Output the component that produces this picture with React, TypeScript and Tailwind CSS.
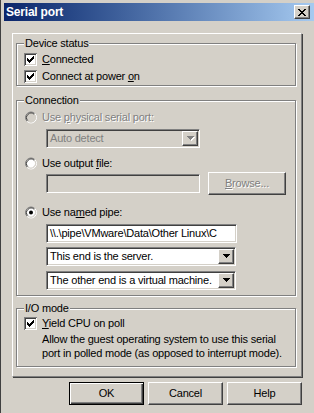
import React from "react";

const sunken =
  "border border-t-[#808080] border-l-[#808080] border-r-white border-b-white shadow-[inset_1px_1px_0_#404040,inset_-1px_-1px_0_#d4d0c8]";
const raised =
  "border border-t-white border-l-white border-r-[#404040] border-b-[#404040] shadow-[inset_-1px_-1px_0_#808080]";
const disabledText = "text-[#808080] [text-shadow:1px_1px_0_#fff]";

const CheckBox = () => (
  <svg width="13" height="13" viewBox="0 0 13 13" shapeRendering="crispEdges" className="shrink-0">
    <rect x="0" y="0" width="13" height="13" fill="#808080" />
    <rect x="1" y="1" width="12" height="12" fill="#fff" />
    <rect x="1" y="1" width="11" height="11" fill="#404040" />
    <rect x="2" y="2" width="10" height="10" fill="#d4d0c8" />
    <rect x="2" y="2" width="9" height="9" fill="#fff" />
    <path
      d="M3 5h1v3h-1zM4 6h1v3h-1zM5 7h1v3h-1zM6 6h1v3h-1zM7 5h1v3h-1zM8 4h1v3h-1zM9 3h1v3h-1z"
      fill="#000"
    />
  </svg>
);

const Radio = ({ checked, disabled }: { checked?: boolean; disabled?: boolean }) => (
  <svg width="13" height="13" viewBox="0 0 13 13" className="shrink-0">
    <circle cx="7" cy="6.5" r="4.5" fill={disabled ? "#d4d0c8" : "#fff"} />
    <path d="M3.11 10.39A5.5 5.5 0 0 1 10.89 2.61" stroke="#808080" fill="none" />
    <path d="M10.89 2.61A5.5 5.5 0 0 1 3.11 10.39" stroke="#fff" fill="none" />
    <path d="M3.82 9.68A4.5 4.5 0 0 1 10.18 3.32" stroke="#404040" fill="none" />
    <path d="M10.18 3.32A4.5 4.5 0 0 1 3.82 9.68" stroke="#d4d0c8" fill="none" />
    {checked && <circle cx="7" cy="6.5" r="2" fill="#000" />}
  </svg>
);

const Arrow = ({ disabled }: { disabled?: boolean }) => (
  <svg width="7" height="5" viewBox="0 0 7 5" shapeRendering="crispEdges" className="overflow-visible">
    {disabled && <path d="M1 1h7v1h-1v1h-1v1h-1v1h-1v-1h-1v-1h-1v-1h-1z" fill="#fff" />}
    <path d="M0 0h7v1h-1v1h-1v1h-1v1h-1v-1h-1v-1h-1v-1h-1z" fill={disabled ? "#808080" : "#000"} />
  </svg>
);

const Combo = ({ text, disabled, width }: { text: string; disabled?: boolean; width: string }) => (
  <div className={`flex h-[19px] p-px ${width} ${sunken} ${disabled ? "bg-[#d4d0c8]" : "bg-white"}`}>
    <span className={`flex-1 truncate pl-[2px] leading-[15px] ${disabled ? "text-[#808080]" : ""}`}>{text}</span>
    <div className={`flex w-[16px] items-center justify-center bg-[#d4d0c8] ${raised}`}>
      <Arrow disabled={disabled} />
    </div>
  </div>
);

const Group = ({ label, className, children }: { label: string; className: string; children: React.ReactNode }) => (
  <fieldset
    className={`border border-[#808080] px-[7px] shadow-[inset_1px_1px_0_#fff,1px_1px_0_#fff] ${className}`}
  >
    <legend className="bg-[#d4d0c8] px-px leading-[13px]">{label}</legend>
    {children}
  </fieldset>
);

const Row = ({ children, className = "" }: { children: React.ReactNode; className?: string }) => (
  <div className={`flex h-[13px] items-center gap-[5px] leading-[13px] ${className}`}>{children}</div>
);

export default function App() {
  return (
    <div className="h-[413px] w-[314px] overflow-hidden bg-[#d4d0c8] pt-[3px] font-['Liberation_Sans',Arial,sans-serif] text-[11px] tracking-[-0.2px] text-black shadow-[inset_1px_0_0_#404040]">
      {/* title bar */}
      <div className="ml-[4px] flex h-[18px] items-center justify-between bg-gradient-to-r from-[#0a246a] to-[#a6caf0] pl-[2px] pr-[4px]">
        <span className="text-[12px] font-bold text-white">Serial port</span>
        <div className={`flex h-[14px] w-[16px] items-center justify-center bg-[#d4d0c8] ${raised}`}>
          <svg width="8" height="7" viewBox="0 0 8 7" shapeRendering="crispEdges">
            <path
              d="M0 0h2v1h-2zM6 0h2v1h-2zM1 1h2v1h-2zM5 1h2v1h-2zM2 2h4v1h-4zM3 3h2v1h-2zM2 4h4v1h-4zM1 5h2v1h-2zM5 5h2v1h-2zM0 6h2v1h-2zM6 6h2v1h-2z"
              fill="#000"
            />
          </svg>
        </div>
      </div>

      <div className="ml-[12px] mt-[12px] flex w-[290px] flex-col">
        <div className="flex flex-col border border-b-[#808080] border-l-white border-r-[#808080] border-t-white pb-[9px] pl-[3px] pr-[5px] pt-[3px] shadow-[1px_1px_0_#404040]">
          <Group label="Device status" className="flex flex-col gap-[4px] pb-[2px] pt-[3px]">
            <Row>
              <CheckBox />
              <span>
                <u>C</u>onnected
              </span>
            </Row>
            <Row>
              <CheckBox />
              <span>
                Connect at power <u>o</u>n
              </span>
            </Row>
          </Group>

          <Group label="Connection" className="mt-[8px] flex flex-col pb-[5px] pt-[4px]">
            <Row>
              <Radio disabled />
              <span className={disabledText}>
                Use <u>p</u>hysical serial port:
              </span>
            </Row>
            <div className="mt-[5px] pl-[22px]">
              <Combo text="Auto detect" disabled width="w-[154px]" />
            </div>
            <Row className="mt-[9px]">
              <Radio />
              <span>
                Use output <u>f</u>ile:
              </span>
            </Row>
            <div className="mt-[2px] flex h-[23px] items-center gap-[8px] pl-[22px]">
              <div className={`h-[19px] w-[154px] bg-[#d4d0c8] ${sunken}`} />
              <div className={`flex h-[23px] w-[78px] items-center justify-center ${raised} ${disabledText}`}>
                <span>
                  <u>B</u>rowse...
                </span>
              </div>
            </div>
            <Row className="mt-[11px]">
              <Radio checked />
              <span>
                Use na<u>m</u>ed pipe:
              </span>
            </Row>
            <div className="mt-[5px] flex flex-col pl-[22px]">
              <div className={`h-[19px] w-[191px] overflow-hidden whitespace-nowrap bg-white pl-[3px] leading-[17px] ${sunken}`}>
                {"\\\\.\\pipe\\VMware\\Data\\Other Linux\\C"}
              </div>
              <div className="mt-[4px]">
                <Combo text="This end is the server." width="w-[190px]" />
              </div>
              <div className="mt-[5px]">
                <Combo text="The other end is a virtual machine." width="w-[190px]" />
              </div>
            </div>
          </Group>

          <Group label="I/O mode" className="mt-[6px] flex flex-col pb-[6px] pt-[2px]">
            <Row>
              <CheckBox />
              <span>
                <u>Y</u>ield CPU on poll
              </span>
            </Row>
            <p className="mt-[2px] pl-[18px] leading-[14px]">
              Allow the guest operating system to use this serial
              <br />
              port in polled mode (as opposed to interrupt mode).
            </p>
          </Group>
        </div>

        <div className="mt-[5px] flex justify-end gap-[4px]">
          <button className="flex h-[23px] w-[75px] items-center justify-center border border-black shadow-[inset_1px_1px_0_#fff,inset_-1px_-1px_0_#404040,inset_-2px_-2px_0_#808080]">
            OK
          </button>
          <button className={`flex h-[23px] w-[75px] items-center justify-center ${raised}`}>Cancel</button>
          <button className={`flex h-[23px] w-[75px] items-center justify-center ${raised}`}>Help</button>
        </div>
      </div>
    </div>
  );
}
